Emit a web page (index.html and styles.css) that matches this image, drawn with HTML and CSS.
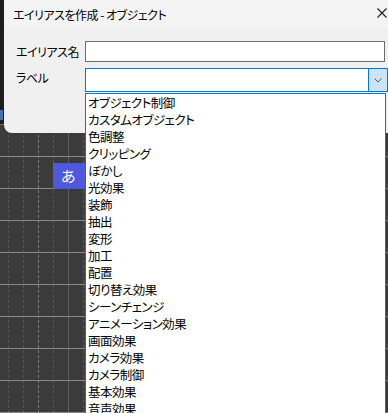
FILE: index.html
```html
<!DOCTYPE html>
<html lang="ja">
<head>
    <meta charset="UTF-8">
    <title>エイリアスを作成 - オブジェクト</title>
    <link rel="stylesheet" href="styles.css">
</head>
<body>
    <!-- Timeline behind the dialog -->
    <div class="timeline">
        <div class="tl-top">
            <span class="tl-mark"></span>
        </div>
        <div class="ruler"></div>
        <div class="tracks">
            <div class="row"></div>
            <div class="row"><div class="clip">あ</div></div>
            <div class="row"></div>
            <div class="row"></div>
            <div class="row"></div>
            <div class="row"></div>
            <div class="row"></div>
            <div class="row"></div>
            <div class="row"></div>
        </div>
    </div>

    <!-- Dialog -->
    <div class="dialog">
        <div class="titlebar">
            <span class="title">エイリアスを作成 - オブジェクト</span>
            <svg class="close" width="10" height="10" viewBox="0 0 10 10">
                <path d="M0.5 0.5 L9.5 9.5 M9.5 0.5 L0.5 9.5" stroke="#1a1a1a" stroke-width="1.1" fill="none"/>
            </svg>
        </div>
        <div class="form">
            <label class="field-label" for="alias-name">エイリアス名</label>
            <input class="text-input" id="alias-name" type="text">
            <label class="field-label">ラベル</label>
            <div class="combo">
                <div class="combo-value"></div>
                <div class="combo-btn">
                    <svg width="8" height="5" viewBox="0 0 8 5">
                        <path d="M0.5 0.5 L4 4 L7.5 0.5" stroke="#555" stroke-width="1" fill="none"/>
                    </svg>
                </div>
            </div>
        </div>
    </div>

    <!-- Open dropdown list -->
    <ul class="dropdown">
        <li>オブジェクト制御</li>
        <li>カスタムオブジェクト</li>
        <li>色調整</li>
        <li>クリッピング</li>
        <li>ぼかし</li>
        <li>光効果</li>
        <li>装飾</li>
        <li>抽出</li>
        <li>変形</li>
        <li>加工</li>
        <li>配置</li>
        <li>切り替え効果</li>
        <li>シーンチェンジ</li>
        <li>アニメーション効果</li>
        <li>画面効果</li>
        <li>カメラ効果</li>
        <li>カメラ制御</li>
        <li>基本効果</li>
        <li>音声効果</li>
    </ul>
</body>
</html>
```

FILE: styles.css
```css
/* General */
body {
    margin: 0;
    width: 388px;
    height: 413px;
    overflow: hidden;
    position: relative;
    background: #3b3b3b;
    font-family: "Noto Sans CJK JP", "Noto Sans", sans-serif;
    font-feature-settings: "palt";
    font-size: 12px;
    letter-spacing: -0.5px;
    color: #000;
}

/* Timeline */
.timeline {
    display: flex;
    flex-direction: column;
    height: 413px;
}

.tl-top {
    height: 133px;
    background: #1e1e1e;
    position: relative;
}

.tl-mark {
    position: absolute;
    left: 0;
    top: 110px;
    width: 3px;
    height: 10px;
    background: #4a6fb0;
}

.ruler {
    height: 4px;
    background: #1e1e1e;
    border-bottom: 1px solid #6e6e6e;
    background-image: repeating-linear-gradient(to right, transparent 0 9px, #6e6e6e 9px 10px);
    background-size: 100% 2px;
    background-position: 0 100%;
    background-repeat: no-repeat;
}

.tracks {
    flex: 1;
    position: relative;
    background: #3b3b3b;
}

/* vertical grid lines */
.tracks::before {
    content: "";
    position: absolute;
    inset: 0;
    background: linear-gradient(to right,
        transparent 8px, #555 8px 9px, transparent 9px 23px,
        #555 23px 24px, transparent 24px 38px,
        #7a7a7a 38px 39px, transparent 39px 53px,
        #555 53px 54px, transparent 54px 83px,
        #555 83px 84px, transparent 84px);
    -webkit-mask-image: repeating-linear-gradient(to bottom, #000 0 3px, transparent 3px 5px);
}

.tracks::after {
    content: "";
    position: absolute;
    top: 0;
    bottom: 0;
    left: 68px;
    width: 1px;
    background: #5e5e5e;
}

.row {
    height: 31px;
    border-bottom: 1px solid #8a8a8a;
    position: relative;
    z-index: 1;
}

.clip {
    position: absolute;
    left: 53px;
    top: 6px;
    width: 60px;
    height: 26px;
    background: #5059de;
    color: #fff;
    font-size: 15px;
    line-height: 26px;
    padding-left: 8px;
    box-sizing: border-box;
}

/* Dialog window */
.dialog {
    position: absolute;
    left: 4px;
    top: 0;
    width: 400px;
    height: 133px;
    background: #f0f0f0;
    border-radius: 0 0 0 8px;
    z-index: 2;
}

.titlebar {
    height: 28px;
    background: #f3f3f3;
    display: flex;
    align-items: center;
    padding-left: 9px;
    position: relative;
}

.close {
    position: absolute;
    left: 373px;
    top: 8px;
}

.form {
    display: grid;
    grid-template-columns: 81px 303px;
    grid-template-rows: 21px 24px;
    row-gap: 6px;
    padding-top: 13px;
    align-items: center;
}

.field-label {
    padding-left: 12px;
    line-height: 16px;
}

.form .field-label:nth-of-type(2) {
    align-self: start;
    padding-top: 2px;
}

.text-input {
    width: 300px;
    height: 21px;
    box-sizing: border-box;
    margin: 0;
    border: 1px solid #6b6b6b;
    background: #fff;
    outline: none;
    padding: 0 3px;
}

.combo {
    display: flex;
    height: 24px;
    box-sizing: border-box;
    border: 1px solid #0078d7;
    background: #fff;
}

.combo-value {
    flex: 1;
}

.combo-btn {
    width: 18px;
    background: #cce4f7;
    border-left: 1px solid #0078d7;
    display: flex;
    align-items: center;
    justify-content: center;
}

/* Dropdown list */
.dropdown {
    position: absolute;
    left: 85px;
    top: 93px;
    width: 301px;
    height: 330px;
    box-sizing: border-box;
    margin: 0;
    padding: 0;
    list-style: none;
    background: #fff;
    border: 1px solid #0078d7;
    z-index: 3;
}

.dropdown li {
    height: 17px;
    line-height: 17px;
    padding-left: 2px;
    font-size: 12.5px;
    white-space: nowrap;
}
```
